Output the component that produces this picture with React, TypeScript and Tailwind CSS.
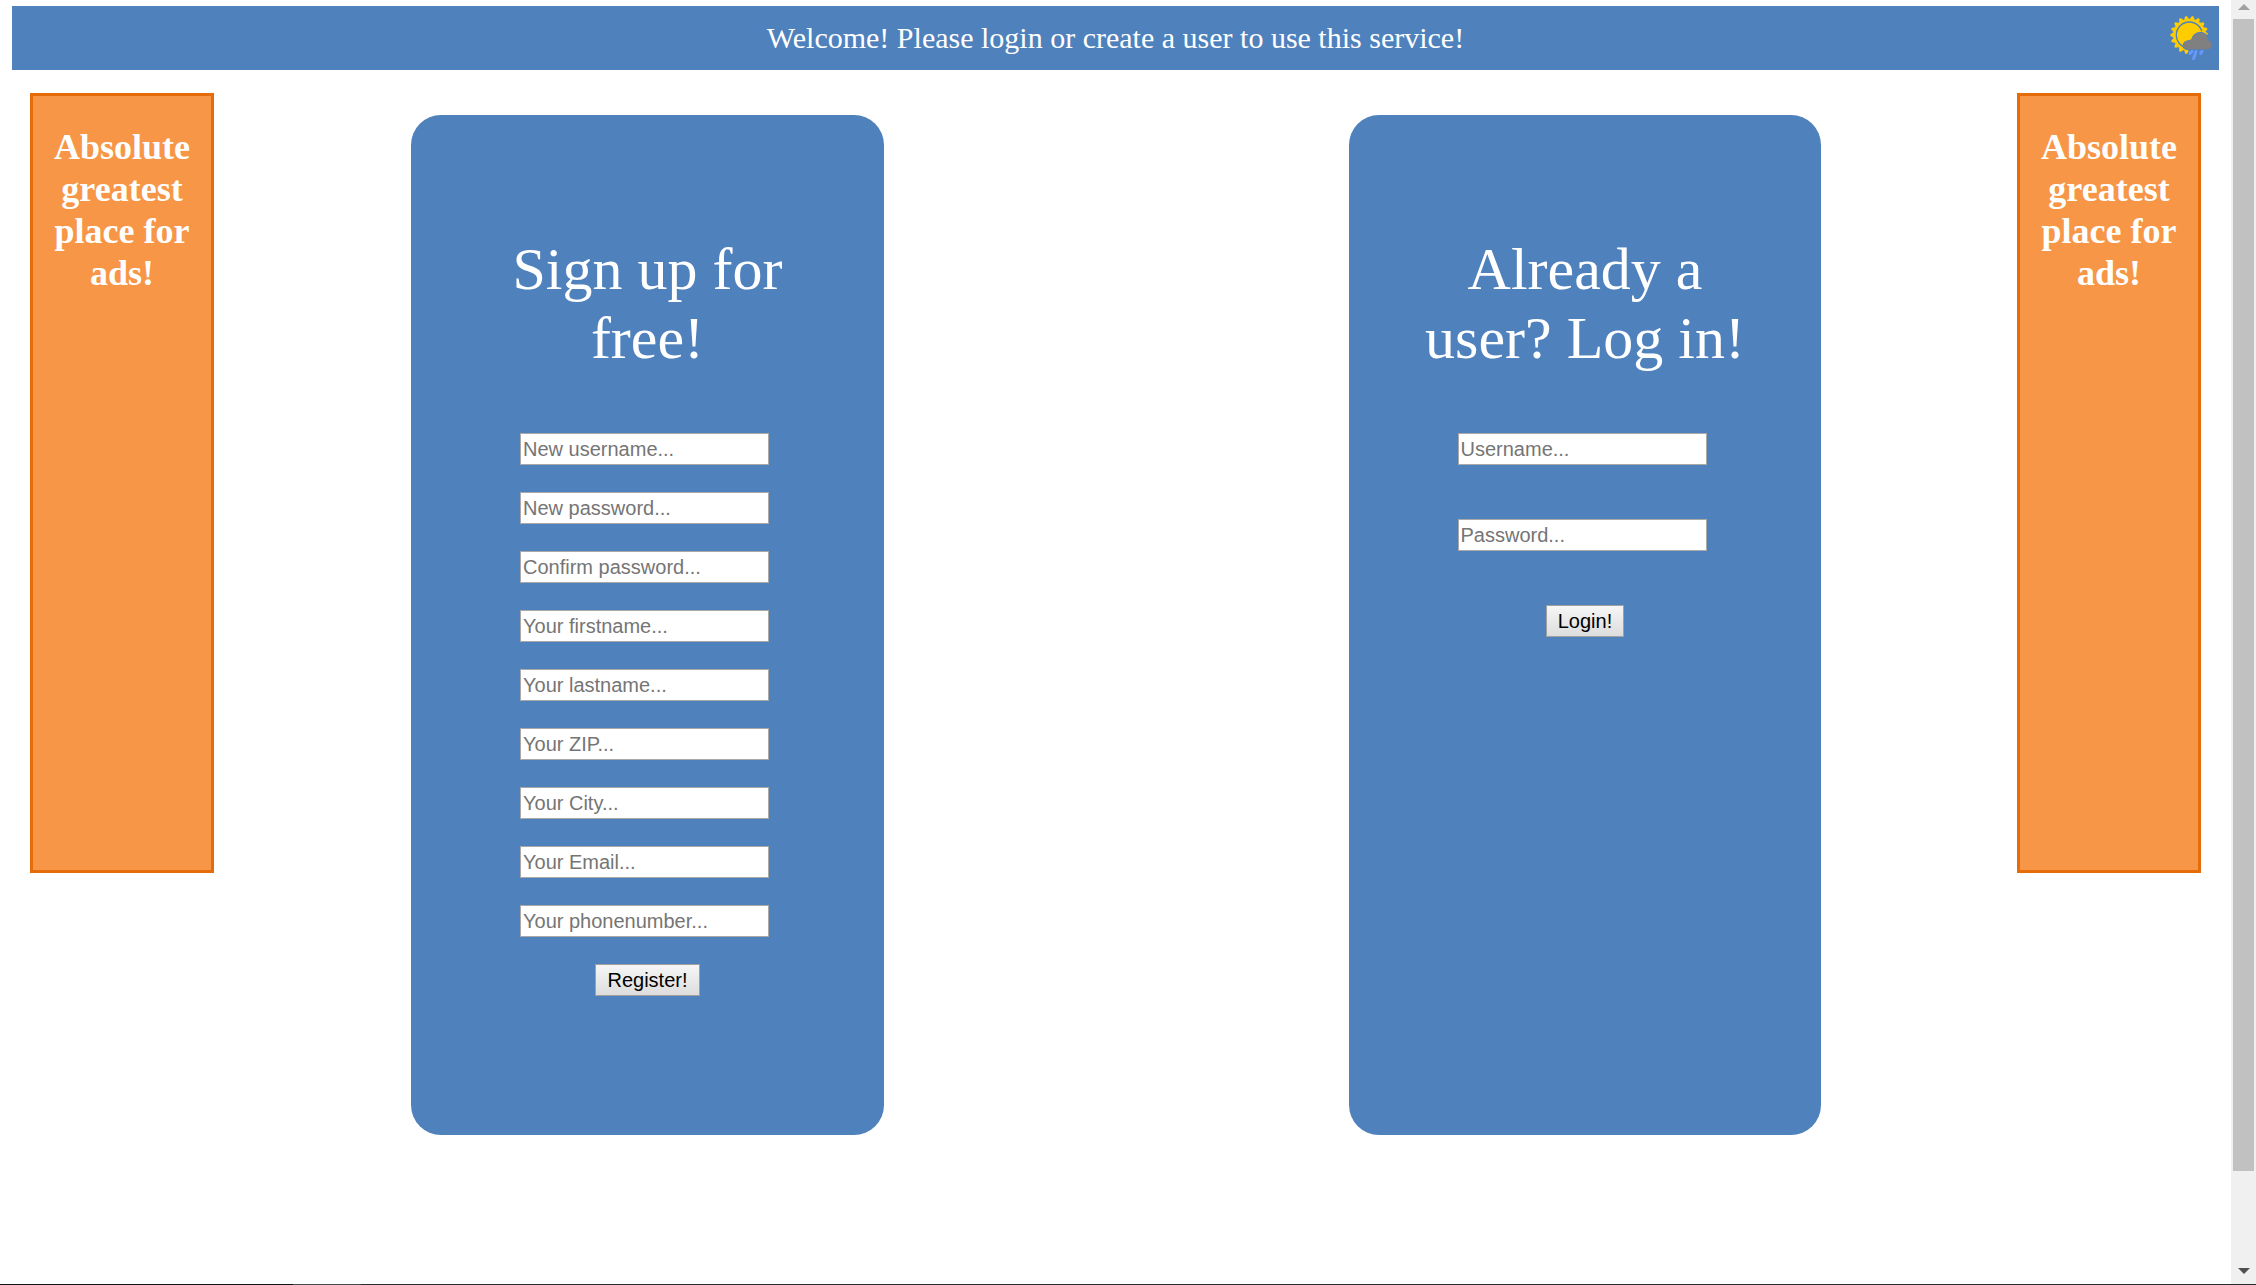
import React from "react";

const SERIF = "font-['Liberation_Serif',serif]";
const SANS = "font-['Liberation_Sans',sans-serif]";

type Field = { name: string; label: string; type?: string };

const signUpFields: Field[] = [
  { name: "newUsername", label: "New username..." },
  { name: "newPassword", label: "New password...", type: "password" },
  { name: "confirmPassword", label: "Confirm password...", type: "password" },
  { name: "firstname", label: "Your firstname..." },
  { name: "lastname", label: "Your lastname..." },
  { name: "zip", label: "Your ZIP..." },
  { name: "city", label: "Your City..." },
  { name: "email", label: "Your Email...", type: "email" },
  { name: "phone", label: "Your phonenumber...", type: "tel" },
];

const loginFields: Field[] = [
  { name: "username", label: "Username..." },
  { name: "password", label: "Password...", type: "password" },
];

function WeatherIcon() {
  const teeth = Array.from({ length: 18 }, (_, i) => i * 20 + 10);
  return (
    <svg viewBox="0 0 132 138" className="h-[46px] w-11" role="img" aria-label="Sun, cloud and rain">
      <g fill="#ffcc00">
        {teeth.map((a) => (
          <path key={a} d="M52 15 L58 4 Q61 1 64 4 L70 15 Z" transform={`rotate(${a} 61 60)`} />
        ))}
        <circle cx="61" cy="60" r="48" />
      </g>
      <circle cx="61" cy="60" r="39" fill="#ffcc00" stroke="#4f81bd" strokeWidth="4" />
      <path d="M58 98 V126 H132 V54 H116 L104 70 Z" fill="#4f81bd" />
      <path d="M98 47 Q110 48 118 56 L115 59 Q107 52 97 51 Z" fill="#ffcc00" />
      <path
        d="M54 103 C38 103 38 80 60 77 C64 77 67 76 69 72 C76 50 104 47 113 63 C116 68 117 71 117 76 C132 78 132 103 116 103 Z"
        fill="#808080"
        stroke="#4f81bd"
        strokeWidth="4"
        paintOrder="stroke"
      />
      <g stroke="#6699ff" strokeWidth="9" strokeLinecap="round">
        <path d="M69 109 L63 115" />
        <path d="M81 109 L74 131" />
        <path d="M99 109 L95 115" />
      </g>
    </svg>
  );
}

function Ad() {
  return (
    <aside className="min-h-[780px] w-[184px] shrink-0 border-[3px] border-[#e46c0a] bg-[#f79646] pt-[30px] text-center">
      <h2 className="px-2 text-4xl leading-[42px] font-bold text-white">Absolute greatest place for ads!</h2>
    </aside>
  );
}

function Panel({
  title,
  fields,
  action,
  gap,
  className,
}: {
  title: string;
  fields: Field[];
  action: string;
  gap: string;
  className: string;
}) {
  return (
    <section className={`mt-[22px] rounded-[30px] bg-[#4f81bd] px-15 pt-30 pb-[139px] ${className}`}>
      <h1 className="mb-[60px] text-center text-6xl leading-[69px] text-white">{title}</h1>
      <form className={`flex flex-col items-center ${gap}`} onSubmit={(e) => e.preventDefault()}>
        {fields.map((f) => (
          <input
            key={f.name}
            name={f.name}
            type={f.type ?? "text"}
            placeholder={f.label}
            aria-label={f.label}
            className={`mr-[6px] h-8 w-[249px] border border-[#a9a9a9] bg-white px-0.5 text-xl leading-6 text-black placeholder:text-[#757575] ${SANS}`}
          />
        ))}
        <button
          type="submit"
          className={`h-8 border border-[#a0a0a0] bg-linear-to-b from-[#f6f6f6] to-[#dddddd] px-[11px] text-xl leading-6 text-black ${SANS}`}
        >
          {action}
        </button>
      </form>
    </section>
  );
}

function ScrollRail() {
  return (
    <div className="flex w-[25px] shrink-0 flex-col items-center bg-[#f0f0f0]" aria-hidden="true">
      <div className="flex h-[19px] items-end pb-[9px]">
        <svg viewBox="0 0 12 6" className="h-1.5 w-3">
          <path d="M0 6 L6 0 L12 6 Z" fill="#a0a0a0" />
        </svg>
      </div>
      <div className="w-[21px] grow bg-[#c1c1c1]" />
      <div className="flex h-[113px] items-end pb-[10px]">
        <svg viewBox="0 0 12 6" className="h-1.5 w-3">
          <path d="M0 0 L6 6 L12 0 Z" fill="#505050" />
        </svg>
      </div>
    </div>
  );
}

export default function App() {
  return (
    <div className={`flex min-h-screen flex-col bg-white ${SERIF}`}>
      <div className="flex grow">
        <div className="grow px-3 pt-1.5">
          <header className="relative flex h-16 items-center justify-center bg-[#4f81bd]">
            <p className="text-3xl leading-9 text-white">
              Welcome! Please login or create a user to use this service!
            </p>
            <div className="absolute inset-y-0 right-1.5 flex items-center">
              <WeatherIcon />
            </div>
          </header>
          <main className="flex items-start px-[18px] pt-[23px]">
            <Ad />
            <div className="grid grow grid-cols-[197fr_473fr_465fr_472fr_196fr]">
              <Panel
                title="Sign up for free!"
                fields={signUpFields}
                action="Register!"
                gap="gap-[27px]"
                className="col-start-2"
              />
              <Panel
                title="Already a user? Log in!"
                fields={loginFields}
                action="Login!"
                gap="gap-[54px]"
                className="col-start-4"
              />
            </div>
            <Ad />
          </main>
        </div>
        <ScrollRail />
      </div>
      <footer className="flex h-px" aria-hidden="true">
        <div className="w-[13%] bg-[#111111]" />
        <div className="w-[3%] bg-[#4a4a4a]" />
        <div className="grow bg-[#2a2a2a]" />
      </footer>
    </div>
  );
}
